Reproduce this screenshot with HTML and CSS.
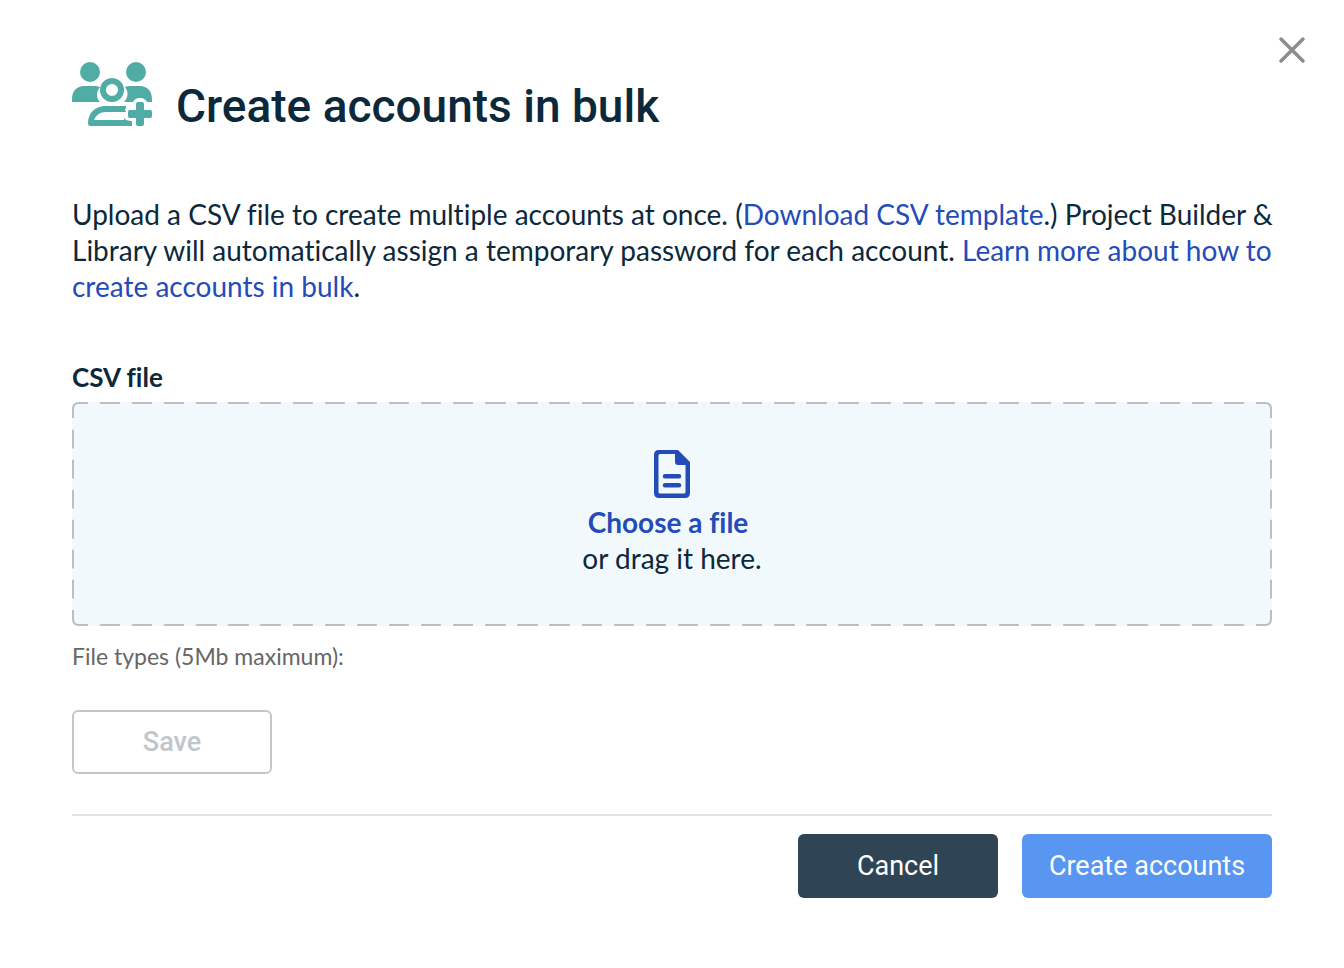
FILE: index.html
```html
<!DOCTYPE html>
<html lang="en">
<head>
<meta charset="utf-8">
<meta name="viewport" content="width=device-width, initial-scale=1">
<title>Create accounts in bulk</title>
<link rel="stylesheet" href="styles.css">
</head>
<body>
<main class="dialog" role="dialog" aria-labelledby="dialog-title">
  <button class="close" type="button" aria-label="Close">
    <svg class="close-icon" viewBox="0 0 28 28" aria-hidden="true"><path d="M3 3 25 25M25 3 3 25"/></svg>
  </button>
  <header class="header">
    <svg class="people-icon" viewBox="0 0 80 64" aria-hidden="true">
      <circle cx="18" cy="10" r="10"/>
      <circle cx="64" cy="10" r="10"/>
      <path fill-rule="evenodd" d="M40 16a12 12 0 1 1 0 24a12 12 0 1 1 0-24zM40 22a6 6 0 1 0 0 12a6 6 0 1 0 0-12z"/>
      <path d="M0 40V37C0 29 5 24 12 24H24L28 25C24 30 24 36 28 40z"/>
      <path d="M56 24H68C75 24 80 29 80 37V40H75C74 38 72 36 68 36C64 36 62 38 61 40H52C56 36 57 30 53 25z"/>
      <path fill-rule="evenodd" d="M34 44H54V46C53 47 53 48 54 50H34C28 50 24 53 22 58H52V56C53 58 56 59 60 59V64H18C17 64 16 63 16 61C16 51 23 44 34 44z"/>
      <path d="M66 40H70Q72 40 72 42V48H78Q80 48 80 50V54Q80 56 78 56H72V62Q72 64 70 64H66Q64 64 64 62V56H58Q56 56 56 54V50Q56 48 58 48H64V42Q64 40 66 40z"/>
    </svg>
    <h1 class="title" id="dialog-title">Create accounts in bulk</h1>
  </header>
  <p class="intro">Upload a CSV file to create multiple accounts at once. (<a class="link" href="#template">Download CSV template</a>.) Project Builder &amp; Library will automatically assign a temporary password for each account. <a class="link" href="#learn">Learn more about how to create accounts in bulk</a>.</p>
  <form class="form">
    <label class="field-label" for="csv-file">CSV file</label>
    <div class="dropzone">
      <input class="file-input" id="csv-file" type="file" accept=".csv">
      <svg class="file-icon" viewBox="0 0 36 48" aria-hidden="true">
        <path fill-rule="evenodd" d="M5 0H24L36 12V43Q36 48 31 48H5Q0 48 0 43V5Q0 0 5 0zM6 4Q4.500 4 4.500 5.500V42Q4.500 43.500 6 43.500H30Q31.500 43.500 31.500 42V15H24Q21 15 21 12V4z"/>
        <path d="M11 24H25a2 2 0 0 1 0 4.500H11a2 2 0 0 1 0-4.500zM11 33H25a2 2 0 0 1 0 4.500H11a2 2 0 0 1 0-4.500z"/>
      </svg>
      <label class="choose" for="csv-file">Choose a file</label>
      <span class="drag">or drag it here.</span>
    </div>
    <p class="hint">File types (5Mb maximum):</p>
    <button class="button button-save" type="submit" disabled>Save</button>
  </form>
  <footer class="footer">
    <button class="button button-cancel" type="button">Cancel</button>
    <button class="button button-create" type="button">Create accounts</button>
  </footer>
</main>
</body>
</html>
```

FILE: styles.css
```css
* {
  box-sizing: border-box;
}

body {
  margin: 0;
  background: #fff;
  color: #0c283b;
  font: 28px/36px Lato, "Open Sans", sans-serif;
  font-variant-ligatures: none;
}

.dialog {
  position: relative;
  padding: 62px 72px 70px;
}

.close {
  position: absolute;
  top: 36px;
  right: 38px;
  display: flex;
  padding: 0;
  border: 0;
  background: none;
  cursor: pointer;
}

.close-icon {
  width: 28px;
  height: 28px;
  fill: none;
  stroke: #8c8c8c;
  stroke-width: 3.5;
  stroke-linecap: round;
}

.header {
  display: flex;
  align-items: flex-end;
  gap: 24px;
}

.people-icon {
  flex: none;
  width: 80px;
  height: 64px;
  margin-bottom: 8px;
  fill: #50aca5;
}

.title {
  margin: 0;
  font: 500 46px/56px Roboto, sans-serif;
}

.intro {
  margin: 62px -8px 0 0;
}

.link {
  color: #244cb8;
  text-decoration: none;
}

.form {
  display: flex;
  flex-direction: column;
  align-items: flex-start;
  margin-top: 55px;
}

.field-label {
  font-size: 26px;
  font-weight: 700;
}

.dropzone {
  position: relative;
  display: flex;
  flex-direction: column;
  align-items: center;
  align-self: stretch;
  margin-top: 7px;
  padding: 46px 24px 48px;
  border: 2px solid transparent;
  border-image: url("data:image/svg+xml,%3Csvg xmlns='http://www.w3.org/2000/svg' width='76' height='76' fill='none' stroke='%23bebebe' stroke-width='2'%3E%3Cpath d='M1 16V7Q1 1 7 1H16M28 1H48M60 1H69Q75 1 75 7V16M75 28V48M75 60V69Q75 75 69 75H60M48 75H28M16 75H7Q1 75 1 69V60M1 48V28'/%3E%3C/svg%3E") 22 / 22px round;
  border-radius: 6px;
  background: #f1f9fc;
}

.file-input {
  position: absolute;
  inset: 0;
  width: 100%;
  height: 100%;
  opacity: 0;
  cursor: pointer;
}

.file-icon {
  width: 36px;
  height: 48px;
  margin-bottom: 6px;
  fill: #244cb8;
}

.choose {
  padding-right: 8px;
  color: #244cb8;
  font-weight: 700;
}

.hint {
  margin: 16px 0 0;
  color: #666;
  font-size: 23px;
  line-height: 28px;
}

.button {
  min-width: 200px;
  height: 64px;
  padding: 0 24px;
  border: 0;
  border-radius: 6px;
  color: #fff;
  font: 400 27px/32px Roboto, sans-serif;
  cursor: pointer;
}

.button-save {
  margin-top: 40px;
  border: 2px solid #bfc7cd;
  background: #fff;
  color: #bfc7cd;
  font-weight: 500;
  cursor: default;
}

.footer {
  display: flex;
  justify-content: flex-end;
  gap: 24px;
  margin-top: 40px;
  padding-top: 18px;
  border-top: 2px solid #e2e2e2;
}

.button-cancel {
  background: #2f4555;
}

.button-create {
  min-width: 250px;
  background: #5896f2;
}
```
